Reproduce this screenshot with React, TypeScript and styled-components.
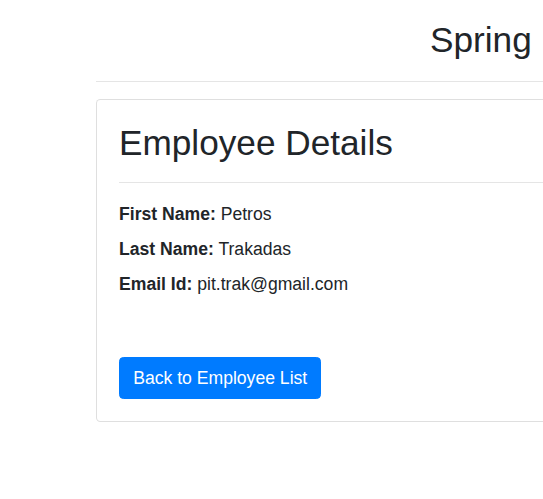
import React from 'react'
import styled, { createGlobalStyle } from 'styled-components'

interface Field {
  label: string
  value: string
}

const employee: Field[] = [
  { label: 'First Name:', value: 'Petros' },
  { label: 'Last Name:', value: 'Trakadas' },
  { label: 'Email Id:', value: 'pit.trak@gmail.com' },
]

export default function App() {
  return (
    <>
      <GlobalStyle />
      <Container>
        <Header>
          <HeaderTitle>Spring</HeaderTitle>
        </Header>
        <Card>
          <CardBody>
            <Title>Employee Details</Title>
            <Divider />
            {employee.map(field => (
              <Row key={field.label}>
                <Label>{field.label}</Label> {field.value}
              </Row>
            ))}
            <Button type="button">Back to Employee List</Button>
          </CardBody>
        </Card>
      </Container>
    </>
  )
}

const GlobalStyle = createGlobalStyle`
  html {
    font-size: 17.6px;
  }
  body {
    margin: 0;
    overflow: hidden;
    background: #fff;
    color: #212529;
    font-family: "Liberation Sans", Arial, sans-serif;
    font-size: 1rem;
    line-height: 1.5;
  }
`

const Container = styled.div`
  margin-left: 96px;
  width: 1000px;
`

const Header = styled.header`
  display: flex;
  padding: 19px 0 20px 334px;
  border-bottom: 1px solid rgba(0, 0, 0, 0.1);
  margin-bottom: 17px;
`

const HeaderTitle = styled.h2`
  margin: 0;
  font-size: 2rem;
  font-weight: 500;
  line-height: 1.2;
`

const Card = styled.div`
  border: 1px solid rgba(0, 0, 0, 0.125);
  border-radius: 4.4px;
  background: #fff;
`

const CardBody = styled.div`
  padding: 22px 22px 22px;
  display: flex;
  flex-direction: column;
  align-items: flex-start;
`

const Title = styled.h2`
  margin: 0;
  font-size: 2rem;
  font-weight: 500;
  line-height: 1.2;
`

const Divider = styled.hr`
  align-self: stretch;
  margin: 1rem 0;
  border: 0;
  border-top: 1px solid rgba(0, 0, 0, 0.1);
`

const Row = styled.div`
  margin-bottom: 0.5rem;
`

const Label = styled.strong`
  font-weight: 700;
`

const Button = styled.button`
  margin-top: 51px;
  padding: 0.375rem 0.75rem;
  border: 1px solid #007bff;
  border-radius: 4.4px;
  background: #007bff;
  color: #fff;
  font-family: inherit;
  font-size: 1rem;
  line-height: 1.5;
  cursor: pointer;
`
